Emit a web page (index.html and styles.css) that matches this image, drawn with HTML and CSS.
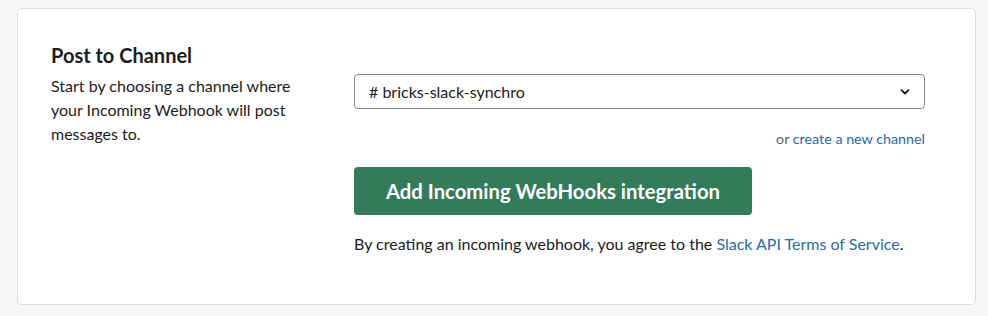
FILE: index.html
```html
<!DOCTYPE html>
<html lang="en">
<head>
    <meta charset="UTF-8">
    <meta name="viewport" content="width=device-width, initial-scale=1.0">
    <title>Incoming WebHooks</title>
    <link rel="stylesheet" href="styles.css">
</head>
<body>
    <div class="card">
        <div class="intro">
            <h2>Post to Channel</h2>
            <p>Start by choosing a channel where your Incoming Webhook will post messages to.</p>
        </div>
        <div class="form">
            <div class="select">
                <span># bricks-slack-synchro</span>
                <svg class="caret" width="10" height="6" viewBox="0 0 10 6">
                    <path d="M1.5 1.2 L5 4.5 L8.5 1.2" fill="none" stroke="#1d1c1d" stroke-width="1.8" stroke-linecap="round" stroke-linejoin="round"/>
                </svg>
            </div>
            <div class="new-channel">or <a href="#">create a new channel</a></div>
            <button class="btn">Add Incoming WebHooks integration</button>
            <p class="terms">By creating an incoming webhook, you agree to the <a href="#">Slack API Terms of Service</a>.</p>
        </div>
    </div>
</body>
</html>
```

FILE: styles.css
```css
body {
    margin: 0;
    padding: 8px 12px 10px 17px;
    background-color: #f6f6f6;
    font-family: 'Lato', 'Liberation Sans', sans-serif;
    color: #1d1c1d;
}
.card {
    display: flex;
    gap: 33px;
    height: 297px;
    box-sizing: border-box;
    padding: 33px 50px 0 33px;
    background-color: #fff;
    border: 1px solid #dddddd;
    border-radius: 5px;
}
.intro {
    width: 270px;
    flex-shrink: 0;
}
h2 {
    margin: 0 0 6px;
    font-size: 20px;
    font-weight: 700;
    line-height: 26px;
}
.intro p {
    margin: 0;
    font-size: 16px;
    line-height: 24px;
}
.form {
    flex: 1;
    padding-top: 32px;
}
.select {
    display: flex;
    align-items: center;
    justify-content: space-between;
    height: 35px;
    box-sizing: border-box;
    padding: 0 14px 0 14px;
    border: 1px solid #868686;
    border-radius: 4px;
    font-size: 16px;
}
.new-channel {
    margin-top: 21px;
    text-align: right;
    font-size: 14.3px;
    color: #616061;
}
a {
    color: #2a6aa8;
    text-decoration: none;
}
.btn {
    display: block;
    margin-top: 20px;
    width: 398px;
    height: 48px;
    font-family: inherit;
    font-size: 20.3px;
    font-weight: 700;
    color: #fff;
    background-color: #347b5b;
    border: none;
    border-radius: 4px;
    cursor: pointer;
}
.terms {
    margin: 19px 0 0;
    font-size: 16px;
}
```
